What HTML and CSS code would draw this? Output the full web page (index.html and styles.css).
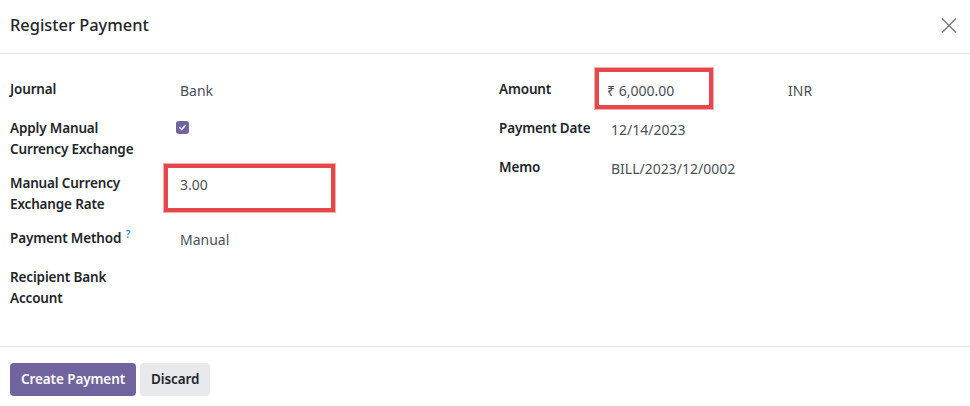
FILE: index.html
```html
<!DOCTYPE html>
<html lang="en">
<head>
<meta charset="utf-8">
<title>Register Payment</title>
<link rel="stylesheet" href="styles.css">
</head>
<body>
<div class="modal">
  <header class="modal-header">
    <h4 class="modal-title">Register Payment</h4>
    <button class="btn-close" aria-label="Close">
      <svg width="16" height="16" viewBox="0 0 16 16"><path d="M1 1.5 L15 15.5 M15 1.5 L1 15.5" stroke="#808080" stroke-width="1.6" fill="none"/></svg>
    </button>
  </header>
  <main class="modal-body">
    <div class="group group-left">
      <div class="label">Journal</div>
      <div class="value">Bank</div>

      <div class="label">Apply Manual Currency Exchange</div>
      <div class="value"><span class="checkbox"><svg width="9" height="9" viewBox="0 0 10 10"><path d="M2 5.2 L4.2 7.2 L8 2.8" stroke="#fff" stroke-width="1.6" fill="none" stroke-linecap="round" stroke-linejoin="round"/></svg></span></div>

      <div class="label">Manual Currency Exchange Rate</div>
      <div class="value annotated">3.00<span class="mark mark-rate"></span></div>

      <div class="label">Payment Method <sup class="help">?</sup></div>
      <div class="value">Manual</div>

      <div class="label">Recipient Bank Account</div>
      <div class="value"></div>
    </div>
    <div class="group group-right">
      <div class="label">Amount</div>
      <div class="value annotated amount">₹ 6,000.00<span class="mark mark-amount"></span></div>
      <div class="value currency">INR</div>

      <div class="label">Payment Date</div>
      <div class="value wide">12/14/2023</div>

      <div class="label">Memo</div>
      <div class="value wide">BILL/2023/12/0002</div>
    </div>
  </main>
  <footer class="modal-footer">
    <button class="btn btn-primary">Create Payment</button>
    <button class="btn btn-secondary">Discard</button>
  </footer>
</div>
</body>
</html>
```

FILE: styles.css
```css
* { box-sizing: border-box; }
html, body { margin: 0; padding: 0; background: #fff; }
body {
  font-family: "Noto Sans", "Open Sans", sans-serif;
  font-size: 14px;
  line-height: 21px;
  color: #212529;
}
.modal { width: 970px; }
.modal-header {
  height: 54px;
  border-bottom: 1px solid #dee2e6;
  display: flex;
  align-items: center;
  justify-content: space-between;
  padding: 0 13px 0 10px;
}
.modal-title {
  margin: 0;
  font-size: 16.4px;
  font-weight: 500;
  line-height: 24px;
  color: #212529;
  padding-bottom: 3px;
}
.btn-close {
  border: 0;
  background: none;
  padding: 0;
  width: 16px;
  height: 16px;
  margin-bottom: 3px;
  display: flex;
}
.modal-body {
  display: grid;
  grid-template-columns: 489px 1fr;
  padding: 24px 10px 38px 10px;
  border-bottom: 1px solid #dee2e6;
}
.group {
  display: grid;
  row-gap: 13px;
  align-items: start;
  align-content: start;
}
.group-left { grid-template-columns: 170px 1fr; }
.group-right { grid-template-columns: 112px 177px 1fr; }
.label {
  font-weight: 600;
  font-size: 13.5px;
  letter-spacing: -0.15px;
  line-height: 21px;
  padding-top: 1px;
  margin-bottom: -1px;
  color: #212529;
}
.group-left .label { padding-right: 24px; }
.group-right .label { padding-right: 8px; }
.value {
  padding: 2px 0 3px;
  min-height: 26px;
  color: #495057;
}
.value.wide { grid-column: span 2; }
.amount { margin-left: -4px; }
.help {
  color: #3f8ed6;
  font-size: 10px;
  font-weight: 600;
  vertical-align: top;
  position: relative;
  top: -4px;
  margin-left: 1px;
}
.checkbox {
  display: inline-flex;
  align-items: center;
  justify-content: center;
  width: 13px;
  height: 13px;
  border-radius: 3px;
  background: #71639e;
  margin: 2px 0 0 -4px;
  vertical-align: top;
}
.annotated { position: relative; }
.mark {
  position: absolute;
  border: 4px solid #e6474a;
  box-shadow: 0 0 0 1px rgba(230, 71, 74, 0.45);
  pointer-events: none;
}
.mark-rate { left: -16px; top: -8px; width: 171px; height: 48px; }
.mark-amount { left: -12px; top: -10px; width: 118px; height: 41px; }
.modal-footer {
  display: flex;
  gap: 4px;
  padding: 16px 10px 10px;
}
.btn {
  font-family: inherit;
  font-size: 13.5px;
  font-weight: 600;
  letter-spacing: -0.1px;
  line-height: 21px;
  border: 0;
  border-radius: 4px;
  padding: 6px 11px;
  height: 33px;
}
.btn-primary { background: #71639e; color: #fff; }
.btn-secondary { background: #e7e9ed; color: #212529; }
```
